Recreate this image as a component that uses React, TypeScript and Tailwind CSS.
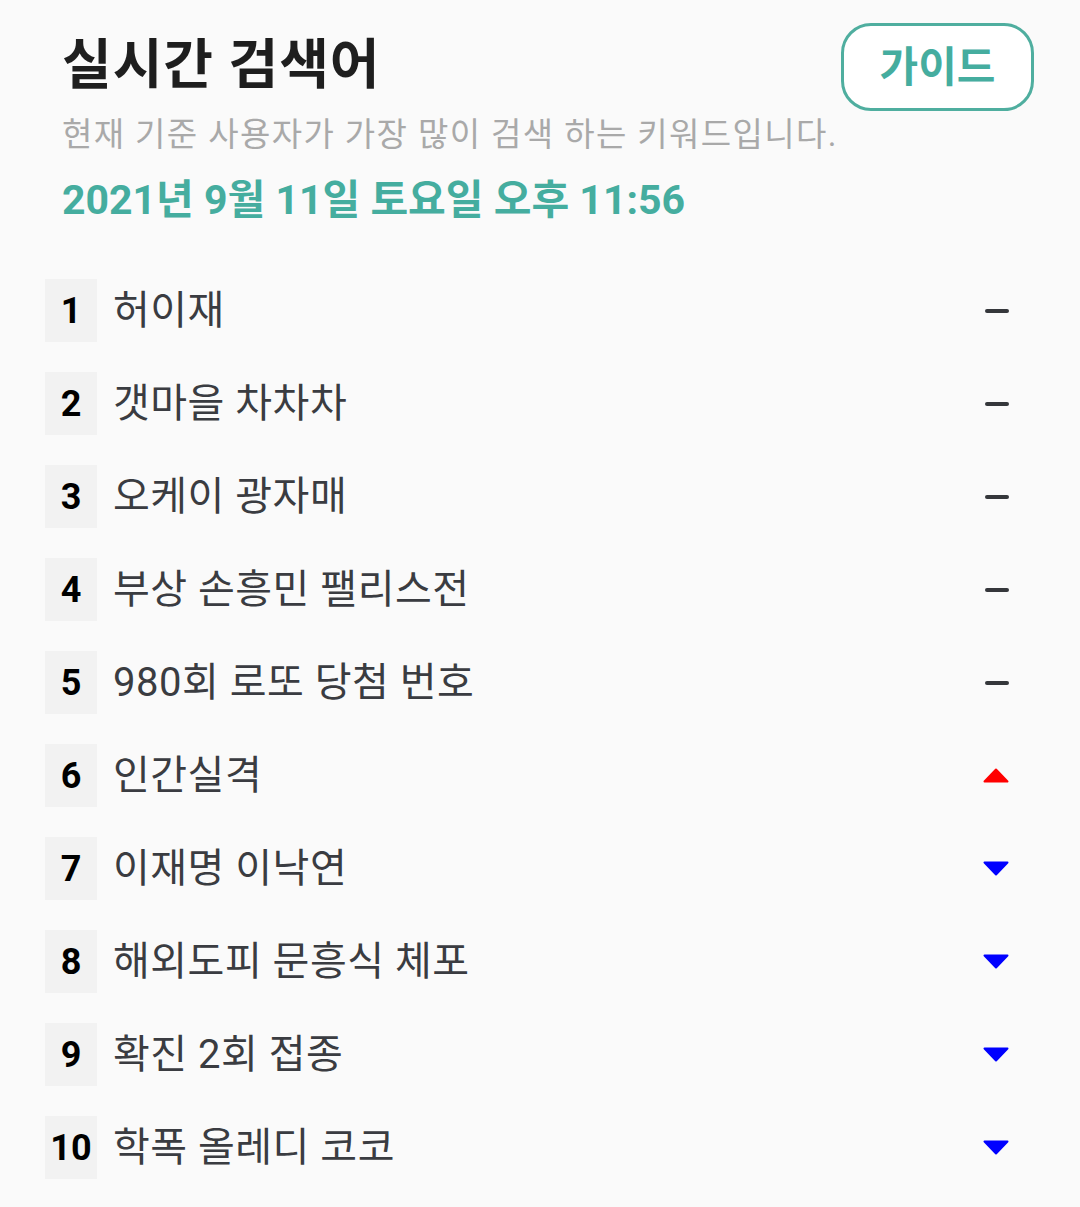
const ITEMS = [
  { rank: 1, keyword: '허이재', trend: 'same' },
  { rank: 2, keyword: '갯마을 차차차', trend: 'same' },
  { rank: 3, keyword: '오케이 광자매', trend: 'same' },
  { rank: 4, keyword: '부상 손흥민 팰리스전', trend: 'same' },
  { rank: 5, keyword: '980회 로또 당첨 번호', trend: 'same' },
  { rank: 6, keyword: '인간실격', trend: 'up' },
  { rank: 7, keyword: '이재명 이낙연', trend: 'down' },
  { rank: 8, keyword: '해외도피 문흥식 체포', trend: 'down' },
  { rank: 9, keyword: '확진 2회 접종', trend: 'down' },
  { rank: 10, keyword: '학폭 올레디 코코', trend: 'down' },
]

function Trend({ trend }: { trend: string }) {
  if (trend === 'up') {
    return (
      <svg width="26" height="15" viewBox="0 0 26 15">
        <path d="M13 1.5 L24.5 13.5 L1.5 13.5 Z" fill="#ff0000" stroke="#ff0000" strokeWidth="2" strokeLinejoin="round" />
      </svg>
    )
  }
  if (trend === 'down') {
    return (
      <svg width="26" height="15" viewBox="0 0 26 15">
        <path d="M1.5 1.5 L24.5 1.5 L13 13.5 Z" fill="#0000ff" stroke="#0000ff" strokeWidth="2" strokeLinejoin="round" />
      </svg>
    )
  }
  return <div className="w-[24px] h-[4px] rounded-full bg-[#35373b]" />
}

export default function App() {
  return (
    <div
      className="w-[1080px] h-[1207px] bg-[#fafafa] overflow-hidden"
      style={{ fontFamily: 'Roboto, "Noto Sans CJK KR", sans-serif' }}
    >
      <header className="relative pl-[62px] pt-[29px]">
        <h1 className="text-[54px] leading-[74px] font-bold text-[#1e1e1e] tracking-[1px]">
          실시간 검색어
        </h1>
        <p className="text-[33px] leading-[46px] text-[#a9a9a9] mt-[9px] tracking-[1.4px]">
          현재 기준 사용자가 가장 많이 검색 하는 키워드입니다.
        </p>
        <p className="text-[41px] leading-[56px] font-bold text-[#45ad9f] mt-[14px]">
          2021년 9월 11일 토요일 오후 11:56
        </p>
        <button className="absolute top-[23px] right-[46px] w-[193px] h-[88px] rounded-[30px] border-[3px] border-[#4fae9f] bg-white text-[42px] font-bold text-[#45ad9f] flex items-center justify-center">
          가이드
        </button>
      </header>

      <ul className="mt-[36px] pl-[45px] pr-[71px]">
        {ITEMS.map((item) => (
          <li key={item.rank} className="h-[93px] flex items-center">
            <div className="w-[52px] h-[63px] bg-[#f2f2f2] flex items-center justify-center text-[36px] font-bold text-black">
              {item.rank}
            </div>
            <span className="ml-[16px] flex-1 text-[40px] tracking-[0.5px] text-[#3a3c41]">
              {item.keyword}
            </span>
            <Trend trend={item.trend} />
          </li>
        ))}
      </ul>
    </div>
  )
}
